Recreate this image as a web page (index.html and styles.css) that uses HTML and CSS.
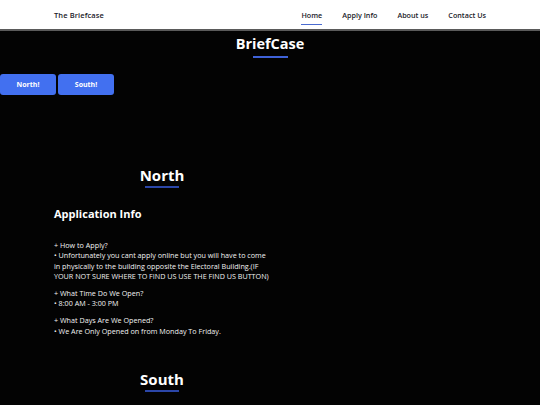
FILE: index.html
```html
<!DOCTYPE html>
<html>
<head>
<meta charset="utf-8">
<link rel="stylesheet" href="styles.css">
</head>
<body>
<header class="topbar">
  <div class="brand">The Briefcase</div>
  <nav class="nav">
    <a class="nav-link active">Home</a>
    <a class="nav-link">Apply Info</a>
    <a class="nav-link">About us</a>
    <a class="nav-link">Contact Us</a>
  </nav>
</header>
<main>
  <h1 class="hero-title">BriefCase</h1>
  <div class="btn-row">
    <button class="btn">North!</button>
    <button class="btn">South!</button>
  </div>
  <section class="region">
    <div class="col">
      <h2 class="region-title">North</h2>
      <h3 class="sub-title">Application Info</h3>
      <p class="info">+ How to Apply?<br>• Unfortunately you cant apply online but you will have to come in physically to the building opposite the Electoral Building.(IF YOUR NOT SURE WHERE TO FIND US USE THE FIND US BUTTON)</p>
      <p class="info">+ What Time Do We Open?<br>• 8:00 AM - 3:00 PM</p>
      <p class="info">+ What Days Are We Opened?<br>• We Are Only Opened on from Monday To Friday.</p>
    </div>
  </section>
  <section class="region south">
    <div class="col">
      <h2 class="region-title">South</h2>
    </div>
  </section>
</main>
</body>
</html>
```
FILE: styles.css
```css
* { box-sizing: border-box; }
html, body { margin: 0; padding: 0; }
body {
  background: #030303;
  font-family: "Open Sans", "Noto Sans", sans-serif;
  color: #fff;
  height: 405px;
  overflow: hidden;
}
.topbar {
  height: 31px;
  background: #fff;
  border-bottom: 2px solid #5a5a5a;
  display: flex;
  align-items: center;
  justify-content: space-between;
  padding: 0 54px;
}
.brand {
  color: #1b1b2a;
  font-size: 7.5px;
  font-weight: 600;
  letter-spacing: 0.1px;
}
.nav { display: flex; gap: 20px; height: 100%; }
.nav-link {
  color: #1b1b2a;
  font-size: 7.2px;
  font-weight: 600;
  display: flex;
  align-items: center;
  position: relative;
}
.nav-link.active::after {
  content: "";
  position: absolute;
  left: 0; right: 0;
  bottom: 4px;
  height: 1px;
  background: #4a6bd0;
}
.hero-title {
  margin: 0;
  padding-top: 3px;
  text-align: center;
  font-size: 14.5px;
  font-weight: 700;
  line-height: 20px;
}
.hero-title::after {
  content: "";
  display: block;
  width: 35px;
  height: 1.5px;
  margin: 2px auto 0;
  background: #3f62d8;
}
.btn-row {
  display: flex;
  gap: 2px;
  margin-top: 16px;
}
.btn {
  width: 56px;
  height: 21px;
  border: none;
  border-radius: 3px;
  background: #4270f0;
  color: #fff;
  font-family: inherit;
  font-size: 7px;
  font-weight: 700;
  padding: 0;
}
.region { padding: 0 54px; }
.col { width: 216px; }
.region-title {
  margin: 70px 0 0;
  text-align: center;
  font-size: 15px;
  font-weight: 700;
  line-height: 20px;
}
.region-title::after {
  content: "";
  display: block;
  width: 34px;
  height: 2px;
  margin: 1px auto 0;
  background: #2b46a8;
}
.sub-title {
  margin: 18px 0 0;
  font-size: 11px;
  font-weight: 700;
  line-height: 16px;
}
.info {
  margin: 18px 0 0;
  font-size: 7.2px;
  line-height: 10.6px;
  color: #f2f2f2;
}
.info + .info { margin-top: 6px; }
.south .region-title { margin-top: 33px; }
```
